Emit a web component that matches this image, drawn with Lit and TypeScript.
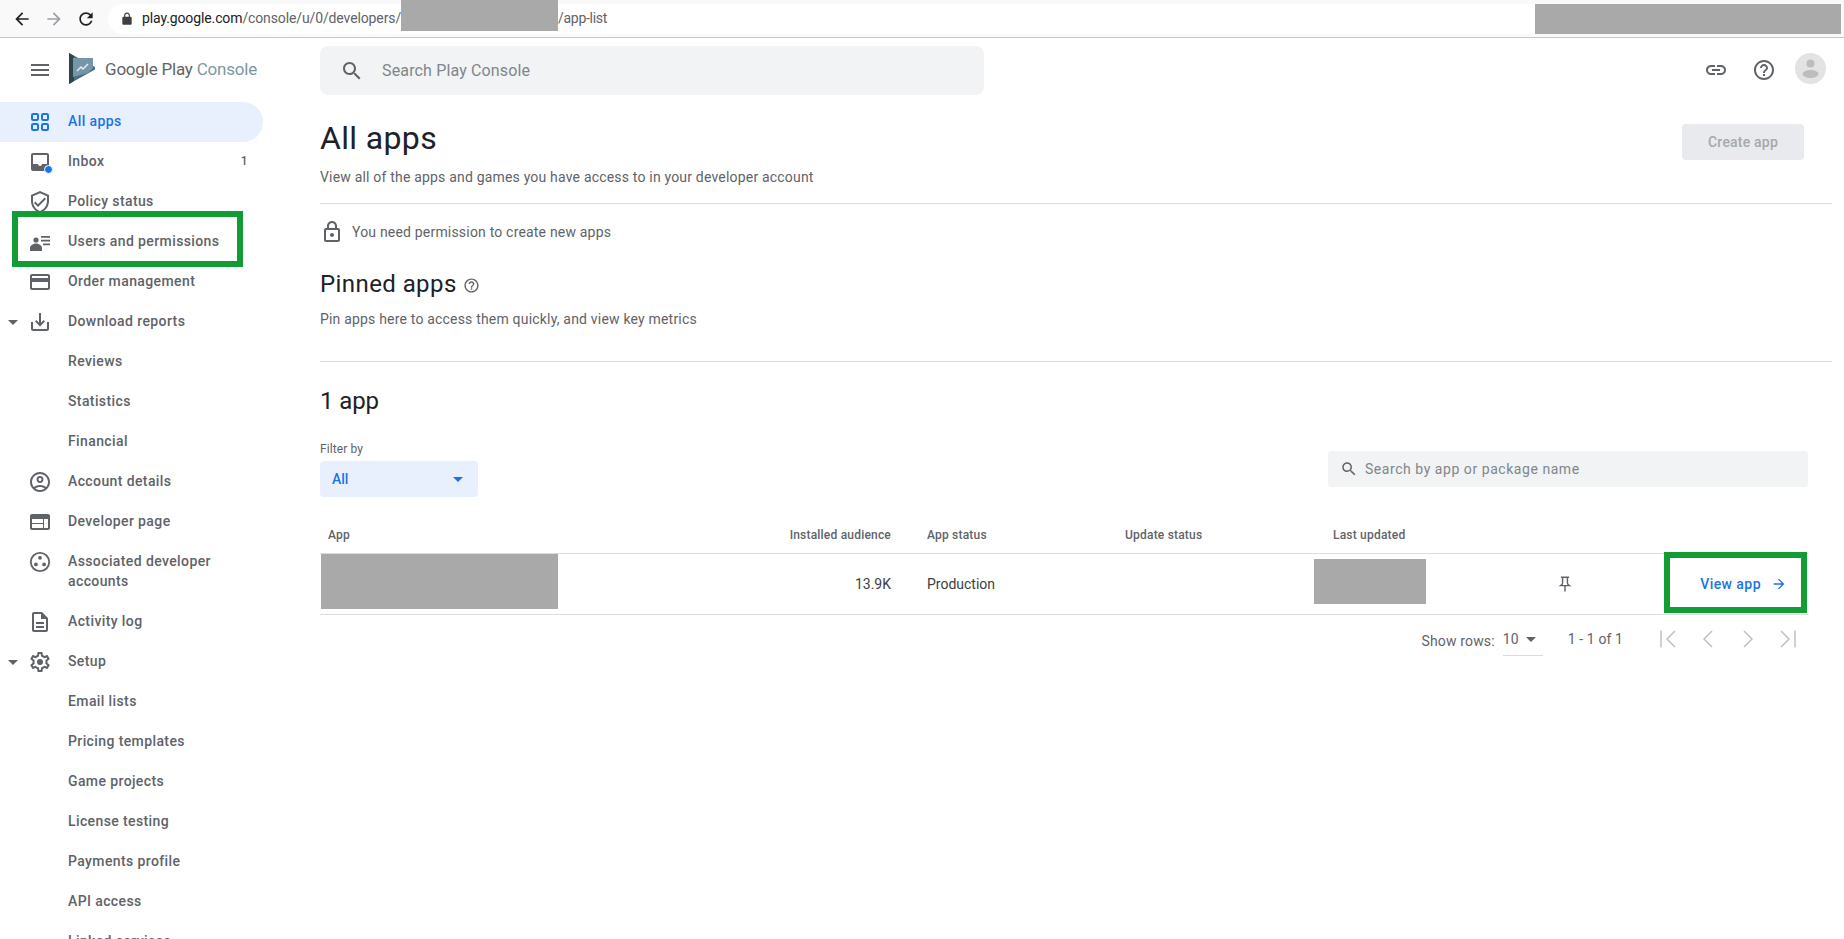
import { LitElement, html, css, svg } from "lit";
import { customElement } from "lit/decorators.js";

const P: Record<string, any> = {
  menu: svg`<path d="M3 18h18v-2H3v2zm0-5h18v-2H3v2zm0-7v2h18V6H3z"/>`,
  apps: svg`<g fill="none" stroke="currentColor" stroke-width="2"><rect x="4" y="4" width="6" height="6" rx="1.2"/><rect x="14" y="4" width="6" height="6" rx="1.2"/><rect x="4" y="14" width="6" height="6" rx="1.2"/><rect x="14" y="14" width="6" height="6" rx="1.2"/></g>`,
  inbox: svg`<path d="M19 3H5c-1.1 0-2 .9-2 2v14c0 1.1.9 2 2 2h14c1.1 0 2-.9 2-2V5c0-1.1-.9-2-2-2zm0 11h-4.99c0 1.1-.9 2-2 2s-2-.9-2-2H5V5h14v9z"/>`,
  policy: svg`<path d="M12 1L3 5v6c0 5.55 3.84 10.74 9 12 5.16-1.26 9-6.45 9-12V5l-9-4zm7 10c0 4.52-2.98 8.69-7 9.93-4.02-1.24-7-5.41-7-9.93V6.3l7-3.11 7 3.11V11zm-11.59.59L6 13l4 4 8-8-1.41-1.42L10 14.17z"/>`,
  users: svg`<circle cx="8" cy="10" r="2.6"/><path d="M2 21v-3.2c0-2.4 3.6-4.3 6-4.3s6 1.9 6 4.3V21z"/><path d="M13 6h9v1.7h-9zM13 9.8h9v1.7h-9zM15 13.6h7v1.7h-7z"/>`,
  card: svg`<path d="M20 4H4c-1.11 0-1.99.89-1.99 2L2 18c0 1.11.89 2 2 2h16c1.11 0 2-.89 2-2V6c0-1.11-.89-2-2-2zm0 14H4v-6h16v6zm0-10H4V6h16v2z"/>`,
  download: svg`<path d="M19 12v7H5v-7H3v7c0 1.1.9 2 2 2h14c1.1 0 2-.9 2-2v-7h-2zm-6 .67l2.59-2.58L17 11.5l-5 5-5-5 1.41-1.41L11 12.67V3h2z"/>`,
  account: svg`<path d="M12 2C6.48 2 2 6.48 2 12s4.48 10 10 10 10-4.48 10-10S17.52 2 12 2zM7.35 18.5C8.66 17.56 10.26 17 12 17s3.34.56 4.65 1.5c-1.31.94-2.91 1.5-4.65 1.5s-3.34-.56-4.65-1.5zm10.79-1.38C16.45 15.8 14.32 15 12 15s-4.45.8-6.14 2.12C4.7 15.73 4 13.95 4 12c0-4.42 3.58-8 8-8s8 3.58 8 8c0 1.95-.7 3.73-1.86 5.12z"/><path d="M12 6c-1.93 0-3.5 1.57-3.5 3.5S10.07 13 12 13s3.5-1.57 3.5-3.5S13.93 6 12 6zm0 5c-.83 0-1.5-.67-1.5-1.5S11.17 8 12 8s1.5.67 1.5 1.5S12.83 11 12 11z"/>`,
  web: svg`<path d="M20 4H4c-1.1 0-2 .9-2 2v12c0 1.1.9 2 2 2h16c1.1 0 2-.9 2-2V6c0-1.1-.9-2-2-2zm-5 14H4v-4h11v4zm0-5H4V9h11v4zm5 5h-4V9h4v9z"/>`,
  assoc: svg`<circle cx="12" cy="12" r="9.2" fill="none" stroke="currentColor" stroke-width="1.8"/><circle cx="12" cy="7.8" r="1.9"/><circle cx="7.9" cy="14.4" r="1.9"/><circle cx="16.1" cy="14.4" r="1.9"/>`,
  doc: svg`<path d="M8 16h8v2H8zm0-4h8v2H8zm6-10H6c-1.1 0-2 .9-2 2v16c0 1.1.89 2 1.99 2H18c1.1 0 2-.9 2-2V8l-6-6zm4 18H6V4h7v5h5v11z"/>`,
  gear: svg`<path d="M19.43 12.98c.04-.32.07-.64.07-.98 0-.34-.03-.66-.07-.98l2.11-1.65c.19-.15.24-.42.12-.64l-2-3.46c-.09-.16-.26-.25-.44-.25-.06 0-.12.01-.17.03l-2.49 1c-.52-.4-1.08-.73-1.69-.98l-.38-2.65C14.46 2.18 14.25 2 14 2h-4c-.25 0-.46.18-.49.42l-.38 2.65c-.61.25-1.17.59-1.69.98l-2.49-1c-.06-.02-.12-.03-.18-.03-.17 0-.34.09-.43.25l-2 3.46c-.13.22-.07.49.12.64l2.11 1.65c-.04.32-.07.65-.07.98 0 .33.03.66.07.98l-2.11 1.65c-.19.15-.24.42-.12.64l2 3.46c.09.16.26.25.44.25.06 0 .12-.01.17-.03l2.49-1c.52.4 1.08.73 1.69.98l.38 2.65c.03.24.24.42.49.42h4c.25 0 .46-.18.49-.42l.38-2.65c.61-.25 1.17-.59 1.69-.98l2.49 1c.06.02.12.03.18.03.17 0 .34-.09.43-.25l2-3.46c.12-.22.07-.49-.12-.64l-2.11-1.65zm-1.98-1.71c.04.31.05.52.05.73 0 .21-.02.43-.05.73l-.14 1.13.89.7 1.08.84-.7 1.21-1.27-.51-1.04-.42-.9.68c-.43.32-.84.56-1.25.73l-1.06.43-.16 1.13-.2 1.35h-1.4l-.19-1.35-.16-1.13-1.06-.43c-.43-.18-.83-.41-1.23-.71l-.91-.7-1.06.43-1.27.51-.7-1.21 1.08-.84.89-.7-.14-1.13c-.03-.31-.05-.54-.05-.74s.02-.43.05-.73l.14-1.13-.89-.7-1.08-.84.7-1.21 1.27.51 1.04.42.9-.68c.43-.32.84-.56 1.25-.73l1.06-.43.16-1.13.2-1.35h1.39l.19 1.35.16 1.13 1.06.43c.43.18.83.41 1.23.71l.91.7 1.06-.43 1.27-.51.7 1.21-1.07.85-.89.7.14 1.13z"/><circle cx="12" cy="12" r="3"/>`,
  search: svg`<path d="M15.5 14h-.79l-.28-.27C15.41 12.59 16 11.11 16 9.5 16 5.91 13.09 3 9.5 3S3 5.91 3 9.5 5.91 16 9.5 16c1.61 0 3.09-.59 4.23-1.57l.27.28v.79l5 4.99L20.49 19l-4.99-5zm-6 0C7.01 14 5 11.99 5 9.5S7.01 5 9.5 5 14 7.01 14 9.5 11.99 14 9.5 14z"/>`,
  link: svg`<path d="M3.9 12c0-1.71 1.39-3.1 3.1-3.1h4V7H7c-2.76 0-5 2.24-5 5s2.24 5 5 5h4v-1.9H7c-1.71 0-3.1-1.39-3.1-3.1zM8 13h8v-2H8v2zm9-6h-4v1.9h4c1.71 0 3.1 1.39 3.1 3.1s-1.39 3.1-3.1 3.1h-4V17h4c2.76 0 5-2.24 5-5s-2.24-5-5-5z"/>`,
  help: svg`<path d="M11 18h2v-2h-2v2zm1-16C6.48 2 2 6.48 2 12s4.48 10 10 10 10-4.48 10-10S17.52 2 12 2zm0 18c-4.41 0-8-3.59-8-8s3.59-8 8-8 8 3.59 8 8-3.59 8-8 8zm0-14c-2.21 0-4 1.79-4 4h2c0-1.1.9-2 2-2s2 .9 2 2c0 2-3 1.75-3 5h2c0-2.25 3-2.5 3-5 0-2.21-1.79-4-4-4z"/>`,
  lock: svg`<path d="M18 8h-1V6c0-2.76-2.24-5-5-5S7 3.24 7 6v2H6c-1.1 0-2 .9-2 2v10c0 1.1.9 2 2 2h12c1.1 0 2-.9 2-2V10c0-1.1-.9-2-2-2zM9 6c0-1.66 1.34-3 3-3s3 1.34 3 3v2H9V6zm9 14H6V10h12v10zm-6-3c1.1 0 2-.9 2-2s-.9-2-2-2-2 .9-2 2 .9 2 2 2z"/>`,
  lockFill: svg`<path d="M18 8h-1V6c0-2.76-2.24-5-5-5S7 3.24 7 6v2H6c-1.1 0-2 .9-2 2v10c0 1.1.9 2 2 2h12c1.1 0 2-.9 2-2V10c0-1.1-.9-2-2-2zM9 8V6c0-1.66 1.34-3 3-3s3 1.34 3 3v2H9z"/>`,
  pin: svg`<path d="M6.5 3h11M8.8 3v7.5c0 1.4-1.2 2.8-2.6 3.7h11.6c-1.4-.9-2.6-2.3-2.6-3.7V3M12 14.2V22" fill="none" stroke="currentColor" stroke-width="1.9"/>`,
  back: svg`<path d="M20 11H7.83l5.59-5.59L12 4l-8 8 8 8 1.41-1.41L7.83 13H20v-2z"/>`,
  forward: svg`<path d="M12 4l-1.41 1.41L16.17 11H4v2h12.17l-5.58 5.59L12 20l8-8z"/>`,
  reload: svg`<path d="M17.65 6.35C16.2 4.9 14.21 4 12 4c-4.42 0-7.99 3.58-7.99 8s3.57 8 7.99 8c3.73 0 6.84-2.55 7.73-6h-2.08c-.82 2.33-3.04 4-5.65 4-3.31 0-6-2.69-6-6s2.69-6 6-6c1.66 0 3.14.69 4.22 1.78L13 11h7V4l-2.35 2.35z"/>`,
  caret: svg`<path d="M7 10l5 5 5-5z"/>`,
  first: svg`<path d="M5 3.5v17M19 4l-8 8 8 8" fill="none" stroke="currentColor" stroke-width="1.5"/>`,
  prev: svg`<path d="M16 4l-8 8 8 8" fill="none" stroke="currentColor" stroke-width="1.5"/>`,
  next: svg`<path d="M8 4l8 8-8 8" fill="none" stroke="currentColor" stroke-width="1.5"/>`,
  last: svg`<path d="M19 3.5v17M5 4l8 8-8 8" fill="none" stroke="currentColor" stroke-width="1.5"/>`,
};

const icon = (n: string, cls = "") =>
  html`<svg class="ic ${cls}" viewBox="0 0 24 24" fill="currentColor">${P[n]}</svg>`;

type Nav = { t: string; i?: string; caret?: boolean; cls?: string; badge?: string; dot?: boolean };
const NAV: Nav[] = [
  { t: "All apps", i: "apps", cls: "active" },
  { t: "Inbox", i: "inbox", badge: "1", dot: true },
  { t: "Policy status", i: "policy" },
  { t: "Users and permissions", i: "users" },
  { t: "Order management", i: "card" },
  { t: "Download reports", i: "download", caret: true },
  { t: "Reviews" },
  { t: "Statistics" },
  { t: "Financial" },
  { t: "Account details", i: "account" },
  { t: "Developer page", i: "web" },
  { t: "Associated developer accounts", i: "assoc", cls: "tall" },
  { t: "Activity log", i: "doc" },
  { t: "Setup", i: "gear", caret: true },
  { t: "Email lists" },
  { t: "Pricing templates" },
  { t: "Game projects" },
  { t: "License testing" },
  { t: "Payments profile" },
  { t: "API access" },
  { t: "Linked services" },
];

@customElement("app-root")
export class AppRoot extends LitElement {
  static styles = css`
    :host {
      display: block;
      position: relative;
      width: 1844px;
      height: 939px;
      overflow: hidden;
      background: #fff;
      font-family: Roboto, "Liberation Sans", sans-serif;
      color: #5f6368;
      font-size: 14px;
    }
    .ic { width: 24px; height: 24px; display: block; flex: none; }

    /* browser chrome */
    .chrome {
      height: 37px;
      border-bottom: 1px solid #c4c6c8;
      background: #f9f9fa;
      display: flex;
      align-items: center;
      box-sizing: content-box;
      color: #202124;
    }
    .nav-btns { display: flex; width: 108px; padding-left: 12px; box-sizing: border-box; gap: 12px; flex: none; }
    .nav-btns .ic { width: 20px; height: 20px; }
    .nav-btns .dim { color: #9aa0a6; }
    .omni {
      flex: none;
      width: 1427px;
      height: 30px;
      border-radius: 15px 0 0 15px;
      background: #fff;
      display: flex;
      align-items: center;
      padding: 0 0 2px 12px;
      box-sizing: border-box;
      font-size: 14px;
      letter-spacing: -0.12px;
      white-space: nowrap;
    }
    .omni .ic { width: 14px; height: 14px; color: #3c4043; margin-right: 8px; margin-top: 2px; }
    .omni .dom { color: #202124; }
    .omni .path { color: #5f6368; }
    .omni .tail { color: #5f6368; letter-spacing: -0.3px; }
    .url-red { width: 157px; height: 31px; margin-top: -4px; background: #a9a9a9; flex: none; }
    .chrome-red { width: 306px; height: 30px; background: #a9a9a9; flex: none; }

    .shell { display: flex; height: 901px; }

    /* sidebar */
    .side { width: 320px; flex: none; overflow: hidden; }
    .brand { height: 64px; display: flex; align-items: center; }
    .brand .burger { margin-left: 28px; width: 24px; height: 24px; color: #5f6368; }
    .logo { width: 30px; height: 32px; margin-left: 15px; flex: none; margin-top: -2px; }
    .brand-text { margin-left: 8px; margin-top: -2px; font-size: 17px; letter-spacing: -0.2px; color: #5f6368; white-space: nowrap; }
    .brand-text b { font-weight: 400; color: #7d97a5; }
    .row {
      position: relative;
      width: 263px;
      min-height: 40px;
      display: flex;
      align-items: center;
      box-sizing: border-box;
      padding: 0 16px 2px 68px;
      font-weight: 500;
      font-size: 14px;
      line-height: 20px;
      letter-spacing: 0.39px;
      color: #5f6368;
    }
    .row.active { background: #e8f0fe; color: #1a73e8; border-radius: 0 20px 20px 0; }
    .row.tall { height: 60px; align-items: flex-start; padding-top: 9px; padding-right: 30px; }
    .row-ic { position: absolute; left: 28px; top: 8px; width: 24px; height: 24px; }
    .row-ic.dot::after {
      content: "";
      position: absolute;
      right: -1px;
      bottom: 0;
      width: 7px;
      height: 7px;
      border-radius: 50%;
      background: #1a73e8;
      border: 1px solid #fff;
    }
    .row-caret { position: absolute; left: 1px; top: 8px; width: 24px; height: 24px; }
    .badge { margin-left: auto; margin-right: -1px; font-size: 12px; }

    /* main */
    .main { flex: 1; min-width: 0; padding-right: 12px; }
    .topbar { display: flex; align-items: flex-start; padding-top: 8px; height: 64px; box-sizing: border-box; }
    .search {
      width: 664px;
      height: 49px;
      border-radius: 8px;
      background: #f1f3f4;
      display: flex;
      align-items: center;
      padding-left: 20px;
      box-sizing: border-box;
      font-size: 16px;
      color: #80868b;
      letter-spacing: 0.15px;
    }
    .search .ic { color: #5f6368; margin-right: 18px; margin-left: 0; }
    .tools { margin-left: auto; display: flex; align-items: center; height: 48px; color: #5f6368; }
    .tools .ic + .ic { margin-left: 24px; }
    .avatar {
      width: 31px; height: 31px; border-radius: 50%; background: #e3e3e3; margin-left: 19px; margin-right: 6px; margin-top: -4px;
      display: block; flex: none;
    }

    .head { display: flex; align-items: flex-start; justify-content: space-between; height: 102px; border-bottom: 1px solid #dadce0; box-sizing: border-box; }
    h1 { margin: 14px 0 0; font-weight: 400; font-size: 32px; line-height: 44px; color: #202124; letter-spacing: 0.35px; }
    .sub { line-height: 20px; margin-top: 7px; letter-spacing: 0.19px; }
    .create {
      width: 122px; height: 36px; margin: 22px 28px 0 0; border-radius: 4px; background: #e8eaed; color: #a6a8ab;
      display: flex; align-items: center; justify-content: center; font-weight: 500; font-size: 14px; letter-spacing: 0.2px; padding-bottom: 1px; box-sizing: border-box;
    }
    .perm { display: flex; align-items: center; margin-top: 16px; height: 24px; letter-spacing: 0.19px; }
    .perm .ic { margin-right: 8px; }
    h2 { margin: 0; font-weight: 400; font-size: 24px; line-height: 32px; color: #202124; }
    .pinned { display: flex; align-items: center; margin-top: 24px; height: 32px; }
    .pinned h2 { letter-spacing: 0.42px; }
    .pinned .ic { width: 17px; height: 17px; margin-left: 6px; margin-top: 2px; }
    .pin-sub { line-height: 20px; margin-top: 9px; letter-spacing: 0.19px; padding-bottom: 32px; border-bottom: 1px solid #dadce0; }
    .count { margin-top: 23px; letter-spacing: -0.1px; }
    .filters { display: flex; justify-content: space-between; align-items: flex-start; margin-top: 24px; padding-right: 24px; }
    .f-label { font-size: 12px; line-height: 16px; letter-spacing: 0.1px; }
    .select {
      width: 158px; height: 36px; margin-top: 4px; background: #e8f0fe; border-radius: 4px; color: #1a73e8; font-weight: 500;
      display: flex; align-items: center; justify-content: space-between; padding: 0 8px 0 12px; box-sizing: border-box;
    }
    .tsearch {
      width: 480px; height: 36px; margin-top: 10px; background: #f1f3f4; border-radius: 4px; display: flex; align-items: center;
      padding-left: 12px; box-sizing: border-box; color: #80868b; letter-spacing: 0.55px;
    }
    .tsearch .ic { width: 18px; height: 18px; color: #5f6368; margin-right: 7px; }

    .table { margin-top: 21px; margin-right: 24px; display: grid; grid-template-columns: 240px 339px 198px 208px 208px 107px 1fr; }
    .th { height: 36px; display: flex; align-items: center; font-size: 12px; font-weight: 500; letter-spacing: 0.2px; border-bottom: 1px solid #dadce0; box-sizing: border-box; padding-bottom: 1px; }
    .td { height: 61px; display: flex; align-items: center; border-bottom: 1px solid #dadce0; box-sizing: border-box; color: #3c4043; }
    .pl8 { padding-left: 8px; }
    .pl28 { padding-left: 28px; }
    .right { justify-content: flex-end; padding-right: 8px; }
    .red1 { width: 237px; height: 55px; margin-left: 1px; margin-bottom: 5px; background: #a9a9a9; }
    .red2 { width: 112px; height: 45px; margin-left: 9px; margin-bottom: 5px; background: #a9a9a9; }
    .pincell { color: #5f6368; justify-content: center; padding-right: 3px; }
    .pincell .ic { width: 18px; height: 18px; }
    .view { justify-content: flex-end; padding-right: 21px; color: #1a73e8; font-weight: 500; letter-spacing: 0.45px; }
    .view .ic { width: 16px; height: 16px; margin-left: 10px; }

    .pager { display: flex; align-items: center; margin-right: 24px; height: 40px; margin-top: 4px; justify-content: flex-end; color: #5f6368; }
    .pager .lbl { margin-top: 3px; letter-spacing: 0.15px; }
    .rows { display: flex; align-items: center; width: 40px; height: 30px; margin-left: 8px; border-bottom: 1px solid #dadce0; box-sizing: border-box; margin-top: 4px; padding-bottom: 4px; }
    .rows .ic { margin-left: 0; width: 24px; height: 24px; margin-right: -8px; }
    .range { margin-left: 25px; margin-right: 33px; letter-spacing: 0.1px; }
    .pager .nv { color: #bdc1c6; width: 24px; height: 24px; }
    .pager .nv + .nv { margin-left: 16px; }
    .pager .nv:last-child { margin-right: 8px; }

    .mark { position: absolute; border: 6px solid #119c34; box-sizing: border-box; pointer-events: none; }
    .m1 { left: 12px; top: 211px; width: 231px; height: 56px; }
    .m2 { left: 1664px; top: 552px; width: 143px; height: 61px; }
  `;

  render() {
    return html`
      <div class="chrome">
        <div class="nav-btns">
          ${icon("back")}${icon("forward", "dim")}${icon("reload")}
        </div>
        <div class="omni">
          ${icon("lockFill")}
          <span class="dom">play.google.com</span><span class="path">/console/u/0/developers/</span>
          <span class="url-red"></span>
          <span class="tail">/app-list</span>
        </div>
        <div class="chrome-red"></div>
      </div>
      <div class="shell">
        <aside class="side">
          <div class="brand">
            ${icon("menu", "burger")}
            <svg class="logo" viewBox="0 0 30 32">
              <path d="M2 0 L2 31 L28 16.5 L28 14 Z" fill="#506d7b"/>
              <path d="M2 0 L2 31 L7 28 L7 3 Z" fill="#2f434d"/>
              <path d="M6 5 L26 5 L26 15 L21 20 L6 24 Z" fill="#7595a8"/>
              <path d="M10 18 L14 14 L16 16 L21 11" fill="none" stroke="#e6edf0" stroke-width="1.5"/>
            </svg>
            <span class="brand-text">Google Play <b>Console</b></span>
          </div>
          ${NAV.map(
            (n) => html`<div class="row ${n.cls ?? ""}">
              ${n.caret ? html`<span class="row-caret">${icon("caret")}</span>` : ""}
              ${n.i ? html`<span class="row-ic ${n.dot ? "dot" : ""}">${icon(n.i)}</span>` : ""}
              <span>${n.t}</span>
              ${n.badge ? html`<span class="badge">${n.badge}</span>` : ""}
            </div>`
          )}
        </aside>
        <main class="main">
          <div class="topbar">
            <div class="search">${icon("search")}<span>Search Play Console</span></div>
            <div class="tools">
              ${icon("link")}${icon("help")}
              <svg class="avatar" viewBox="0 0 31 31">
                <circle cx="15.5" cy="10.5" r="4" fill="#bdbdbd"/>
                <ellipse cx="15.5" cy="21" rx="8" ry="4" fill="#bdbdbd"/>
              </svg>
            </div>
          </div>
          <div class="head">
            <div>
              <h1>All apps</h1>
              <div class="sub">View all of the apps and games you have access to in your developer account</div>
            </div>
            <div class="create">Create app</div>
          </div>
          <div class="perm">${icon("lock")}<span>You need permission to create new apps</span></div>
          <div class="pinned"><h2>Pinned apps</h2>${icon("help")}</div>
          <div class="pin-sub">Pin apps here to access them quickly, and view key metrics</div>
          <h2 class="count">1 app</h2>
          <div class="filters">
            <div>
              <div class="f-label">Filter by</div>
              <div class="select"><span>All</span>${icon("caret")}</div>
            </div>
            <div class="tsearch">${icon("search")}<span>Search by app or package name</span></div>
          </div>
          <div class="table">
            <div class="th pl8">App</div>
            <div class="th right">Installed audience</div>
            <div class="th pl28">App status</div>
            <div class="th pl28">Update status</div>
            <div class="th pl28">Last updated</div>
            <div class="th"></div>
            <div class="th"></div>
            <div class="td"><div class="red1"></div></div>
            <div class="td right">13.9K</div>
            <div class="td pl28">Production</div>
            <div class="td"></div>
            <div class="td"><div class="red2"></div></div>
            <div class="td pincell">${icon("pin")}</div>
            <div class="td view">View app ${icon("forward")}</div>
          </div>
          <div class="pager">
            <span class="lbl">Show rows:</span>
            <div class="rows"><span>10</span>${icon("caret")}</div>
            <span class="range">1 - 1 of 1</span>
            ${icon("first", "nv")}${icon("prev", "nv")}${icon("next", "nv")}${icon("last", "nv")}
          </div>
        </main>
      </div>
      <div class="mark m1"></div>
      <div class="mark m2"></div>
    `;
  }
}
